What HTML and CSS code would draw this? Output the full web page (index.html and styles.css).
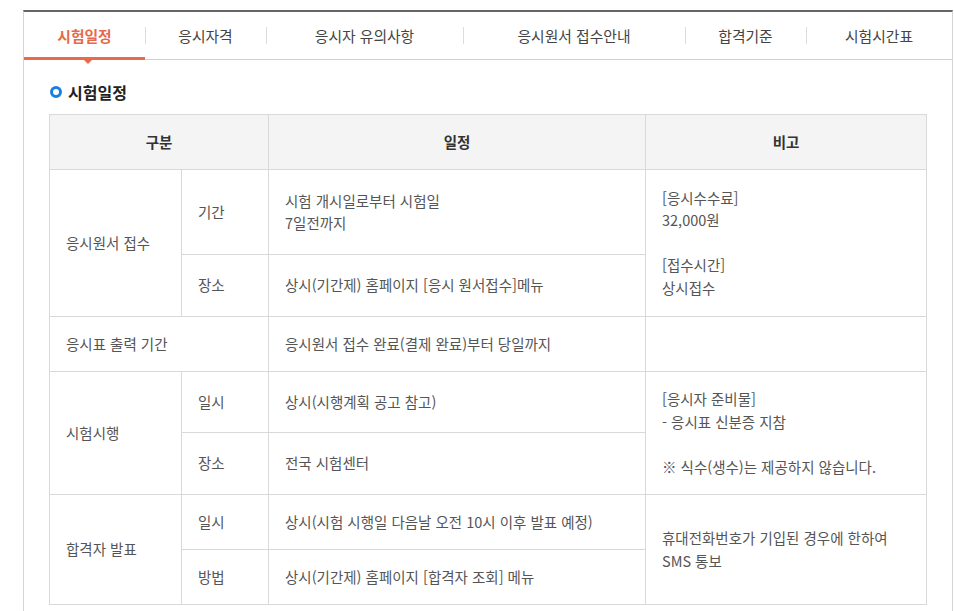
FILE: index.html
```html
<!DOCTYPE html>
<html lang="ko">
<head>
<meta charset="utf-8">
<title>시험일정</title>
<link rel="stylesheet" href="styles.css">
</head>
<body>
<div class="wrap">
  <ul class="tabs">
    <li class="tab t1 active">시험일정<span class="tri"></span></li>
    <li class="tab t2">응시자격</li>
    <li class="tab t3">응시자 유의사항</li>
    <li class="tab t4">응시원서 접수안내</li>
    <li class="tab t5">합격기준</li>
    <li class="tab t6">시험시간표</li>
  </ul>
  <div class="content">
    <h3 class="title"><span class="dot"></span>시험일정</h3>
    <table class="sched">
      <colgroup>
        <col class="c1"><col class="c2"><col class="c3"><col class="c4">
      </colgroup>
      <thead>
        <tr class="h55">
          <th colspan="2">구분</th>
          <th>일정</th>
          <th>비고</th>
        </tr>
      </thead>
      <tbody>
        <tr class="h85">
          <td rowspan="2">응시원서 접수</td>
          <td>기간</td>
          <td>시험 개시일로부터 시험일<br>7일전까지</td>
          <td rowspan="2">[응시수수료]<br>32,000원<br><br>[접수시간]<br>상시접수</td>
        </tr>
        <tr class="h62">
          <td>장소</td>
          <td>상시(기간제) 홈페이지 [응시 원서접수]메뉴</td>
        </tr>
        <tr class="h55">
          <td colspan="2">응시표 출력 기간</td>
          <td>응시원서 접수 완료(결제 완료)부터 당일까지</td>
          <td></td>
        </tr>
        <tr class="h61">
          <td rowspan="2">시험시행</td>
          <td>일시</td>
          <td>상시(시행계획 공고 참고)</td>
          <td rowspan="2">[응시자 준비물]<br>- 응시표 신분증 지참<br><br>※ 식수(생수)는 제공하지 않습니다.</td>
        </tr>
        <tr class="h62">
          <td>장소</td>
          <td>전국 시험센터</td>
        </tr>
        <tr class="h55">
          <td rowspan="2">합격자 발표</td>
          <td>일시</td>
          <td>상시(시험 시행일 다음날 오전 10시 이후 발표 예정)</td>
          <td rowspan="2">휴대전화번호가 기입된 경우에 한하여<br>SMS 통보</td>
        </tr>
        <tr class="h55">
          <td>방법</td>
          <td>상시(기간제) 홈페이지 [합격자 조회] 메뉴</td>
        </tr>
      </tbody>
    </table>
  </div>
</div>
</body>
</html>
```
FILE: styles.css
```css
* { box-sizing: border-box; }
html, body { margin: 0; padding: 0; background: #fff; }
body {
  font-family: "Noto Sans CJK KR", "Noto Sans", sans-serif;
  color: #555;
  font-size: 14.5px;
}
.wrap {
  margin: 10px 0 0 23px;
  width: 930px;
  height: 620px;
  border-top: 2px solid #666;
  border-left: 1px solid #d4d4d4;
  border-right: 1px solid #d4d4d4;
}
.tabs {
  list-style: none;
  margin: 0;
  padding: 0;
  display: flex;
  height: 48px;
  border-bottom: 1px solid #d0d0d0;
}
.tab {
  position: relative;
  display: flex;
  align-items: center;
  justify-content: center;
  height: 47px;
  font-size: 14.8px;
  color: #444;
}
.tab + .tab::before {
  content: "";
  position: absolute;
  left: 0;
  top: 15px;
  height: 17px;
  border-left: 1px solid #dcdcdc;
}
.t1 { width: 121px; }
.t2 { width: 121px; }
.t3 { width: 197px; }
.t4 { width: 222px; }
.t5 { width: 121px; }
.t6 { width: 146px; }
.tab.active {
  color: #e8694a;
  font-weight: 700;
}
.tab.active::after {
  content: "";
  position: absolute;
  left: 0;
  right: 0;
  bottom: -1px;
  height: 3px;
  background: #ea6b4c;
}
.tri {
  position: absolute;
  left: 60px;
  bottom: -5px;
  width: 0;
  height: 0;
  border-left: 4px solid transparent;
  border-right: 4px solid transparent;
  border-top: 4px solid #ea6b4c;
}
.content {
  padding: 19px 25px 0 25px;
}
.title {
  margin: 0 0 9px 1px;
  display: flex;
  align-items: center;
  font-size: 16px;
  font-weight: 700;
  color: #222;
  height: 26px;
}
.dot {
  width: 12px;
  height: 12px;
  border: 3px solid #1a7fe0;
  border-radius: 50%;
  margin-right: 6px;
}
.sched {
  border-collapse: collapse;
  table-layout: fixed;
  width: 877px;
}
.c1 { width: 132px; }
.c2 { width: 87px; }
.c3 { width: 377px; }
.c4 { width: 281px; }
.sched th, .sched td {
  border: 1px solid #d9d9d9;
  padding: 0 16px;
  vertical-align: middle;
  line-height: 22.5px;
  text-align: left;
  font-weight: 400;
}
.sched th {
  background: #f4f4f4;
  text-align: center;
  font-weight: 700;
  color: #333;
}
.h55 { height: 55px; }
.h61 { height: 61px; }
.h62 { height: 62px; }
.h85 { height: 85px; }
```
